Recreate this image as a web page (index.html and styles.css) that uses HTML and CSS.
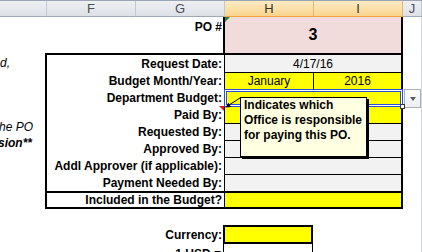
FILE: index.html
```html
<!DOCTYPE html>
<html lang="en">
<head>
  <meta charset="UTF-8" />
  <title>PO Request</title>
  <link rel="stylesheet" href="styles.css">
</head>
<body>
  <div class="sheet">
    <!-- column letters -->
    <div class="col-heads">
      <div class="ch"></div>
      <div class="ch">F</div>
      <div class="ch">G</div>
      <div class="ch sel">H</div>
      <div class="ch sel">I</div>
      <div class="ch">J</div>
      <div class="ch"></div>
    </div>

    <div class="grid-body">
      <!-- column E: notes spilling in from the left -->
      <div class="col-e">
        <div class="note n1"><span>ed,</span></div>
        <div class="note n2"><span>the PO</span></div>
        <div class="note n3"><span>sion**</span></div>
      </div>

      <!-- columns F to I: the form -->
      <div class="col-main">
        <div class="po-row">
          <div class="lbl po-lbl">PO #</div>
          <div class="po-num"><span class="err-mark"></span>3</div>
        </div>

        <div class="form-box">
          <div class="frow">
            <div class="lbl">Request Date:</div>
            <div class="val grey">4/17/16</div>
          </div>
          <div class="frow">
            <div class="lbl">Budget Month/Year:</div>
            <div class="val split">
              <div class="yel">January</div>
              <div class="yel">2016</div>
            </div>
          </div>
          <div class="frow">
            <div class="lbl">Department Budget:</div>
            <div class="val yel selected">
              <span class="handle"></span>
              <span class="dd-btn"></span>
              <svg class="note-arrow" width="18" height="20" viewBox="0 0 18 20">
                <line x1="15" y1="8" x2="3" y2="15.7" stroke="#000" stroke-width="1"/>
                <polygon points="0.5,17.5 6,16.9 3.4,12.7" fill="#000"/>
              </svg>
              <div class="comment">Indicates which<br>Office is responsible<br>for paying this PO.</div>
            </div>
          </div>
          <div class="frow">
            <div class="lbl has-note">Paid By:</div>
            <div class="val yel"></div>
          </div>
          <div class="frow">
            <div class="lbl">Requested By:</div>
            <div class="val grey"></div>
          </div>
          <div class="frow">
            <div class="lbl">Approved By:</div>
            <div class="val grey"></div>
          </div>
          <div class="frow">
            <div class="lbl">Addl Approver (if applicable):</div>
            <div class="val grey"></div>
          </div>
          <div class="frow">
            <div class="lbl">Payment Needed By:</div>
            <div class="val grey"></div>
          </div>
          <div class="frow total">
            <div class="lbl">Included in the Budget?</div>
            <div class="val yel"></div>
          </div>
        </div>

        <div class="cur-row">
          <div class="lbl">Currency:</div>
          <div class="cur-box"></div>
        </div>
        <div class="usd-row">
          <div class="lbl">1 USD =</div>
          <div class="usd-val"></div>
        </div>
      </div>

      <!-- column J -->
      <div class="col-j"></div>
    </div>
  </div>
</body>
</html>
```

FILE: styles.css
```css
* {
  box-sizing: border-box;
  margin: 0;
  padding: 0;
}
html, body {
  overflow: hidden;
}
body {
  font-family: "Liberation Sans", Arial, sans-serif;
  font-size: 12px;
  color: #000;
  background: #fff;
  width: 422px;
  height: 252px;
}
.sheet {
  position: relative;
}

/* column headers */
.col-heads {
  display: grid;
  grid-template-columns: 47px 89px 89px 89px 89px 19px 1fr;
  height: 17px;
  border-top: 1px solid #9aa5b1;
}
.ch {
  display: flex;
  align-items: center;
  justify-content: center;
  border-right: 1px solid #c3c9d2;
  border-bottom: 1px solid #9eaab8;
  background: linear-gradient(#eef0f3, #dde1e6);
  color: #4a4f57;
  font-size: 13px;
  line-height: 1;
}
.ch.sel {
  background: linear-gradient(#fdebc4, #f9d58e);
  border-bottom-color: #f0a53c;
  border-right-color: #e3b96e;
  color: #333;
}

/* sheet body */
.grid-body {
  display: grid;
  grid-template-columns: 45px 358px 19px;
  height: 235px;
}
.col-j {
  border-right: 1px solid #d4d8de;
}

/* column E notes (text spilling over from the left) */
.col-e {
  display: flex;
  flex-direction: column;
  font-style: italic;
  line-height: 16px;
}
.note {
  display: flex;
  justify-content: flex-end;
  white-space: nowrap;
}
.n1 {
  margin-top: 38px;
  padding-right: 35px;
}
.n2 {
  margin-top: 48px;
  padding-right: 12px;
}
.n3 {
  padding-right: 13px;
  font-weight: bold;
}

/* labels */
.lbl {
  display: flex;
  align-items: center;
  justify-content: flex-end;
  padding-right: 2px;
  font-weight: bold;
  white-space: nowrap;
}

/* PO number */
.po-row {
  display: grid;
  grid-template-columns: 178px 180px;
  height: 36px;
}
.po-lbl {
  align-items: flex-start;
  padding-top: 3px;
  padding-right: 1px;
}
.po-num {
  position: relative;
  display: flex;
  align-items: center;
  justify-content: center;
  background: #f2dcdb;
  border-left: 2px solid #000;
  border-right: 2px solid #000;
  font-size: 16px;
  font-weight: bold;
}
.err-mark {
  position: absolute;
  left: 0;
  top: 0;
  border-top: 5px solid #1f8a3a;
  border-right: 5px solid transparent;
}

/* form box */
.form-box {
  border: 2px solid #000;
}
.frow {
  display: grid;
  grid-template-columns: 177px 177px;
  height: 17px;
}
.val {
  display: flex;
  align-items: center;
  justify-content: center;
  border-left: 1px solid #000;
  border-top: 1px solid #000;
}
.frow:first-child .val {
  border-top: none;
}
.grey {
  background: #f2f2f2;
}
.yel {
  background: #ffff00;
}
.split {
  display: grid;
  grid-template-columns: 88px 1fr;
}
.split .yel {
  display: flex;
  align-items: center;
  justify-content: center;
  height: 100%;
}
.split .yel + .yel {
  border-left: 1px solid #000;
}
.frow.total {
  height: 16px;
  border-top: 2px solid #000;
}
.frow.total .val {
  border-top: none;
}

/* comment marker on Paid By */
.has-note {
  position: relative;
}
.has-note::after {
  content: "";
  position: absolute;
  right: 0;
  top: 0;
  border-top: 5px solid #e0141e;
  border-left: 5px solid transparent;
}

/* selected cell, dropdown and comment */
.selected {
  position: relative;
}
.selected::after {
  content: "";
  position: absolute;
  left: -1px;
  top: -1px;
  right: -2px;
  bottom: -1px;
  border: 1px solid #2b4fd6;
  box-shadow: inset 0 0 0 1px #fff, inset 0 0 0 2px #2b4fd6;
}
.handle {
  position: absolute;
  right: -4px;
  bottom: -3px;
  width: 5px;
  height: 5px;
  background: #fff;
  border: 1px solid #333;
  z-index: 2;
}
.dd-btn {
  position: absolute;
  left: 179px;
  top: -1px;
  width: 17px;
  height: 19px;
  border: 1px solid #a9b0b8;
  background: linear-gradient(#fdfdfd, #eceef1);
}
.dd-btn::after {
  content: "";
  position: absolute;
  left: 5px;
  top: 7px;
  border-top: 4px solid #5a5a5a;
  border-left: 3px solid transparent;
  border-right: 3px solid transparent;
}
.note-arrow {
  position: absolute;
  left: 0;
  top: 0;
  z-index: 4;
}
.comment {
  position: absolute;
  left: 15px;
  top: 7px;
  width: 127px;
  height: 60px;
  background: #ffffe1;
  border: 1px solid #000;
  box-shadow: 2px 2px 0 #000;
  padding-left: 3px;
  font-weight: bold;
  font-size: 12px;
  line-height: 15px;
  white-space: nowrap;
  z-index: 5;
}

/* currency */
.cur-row {
  display: grid;
  grid-template-columns: 178px 90px;
  height: 19px;
  margin-top: 16px;
}
.cur-row .lbl {
  padding-right: 1px;
}
.cur-box {
  background: #ffff00;
  border: 2px solid #000;
}
.usd-row {
  display: grid;
  grid-template-columns: 178px 90px;
  height: 20px;
}
.usd-row .lbl {
  align-items: flex-start;
  padding-top: 3px;
}
.usd-val {
  border-left: 1px solid #000;
  border-right: 1px solid #000;
}
```
